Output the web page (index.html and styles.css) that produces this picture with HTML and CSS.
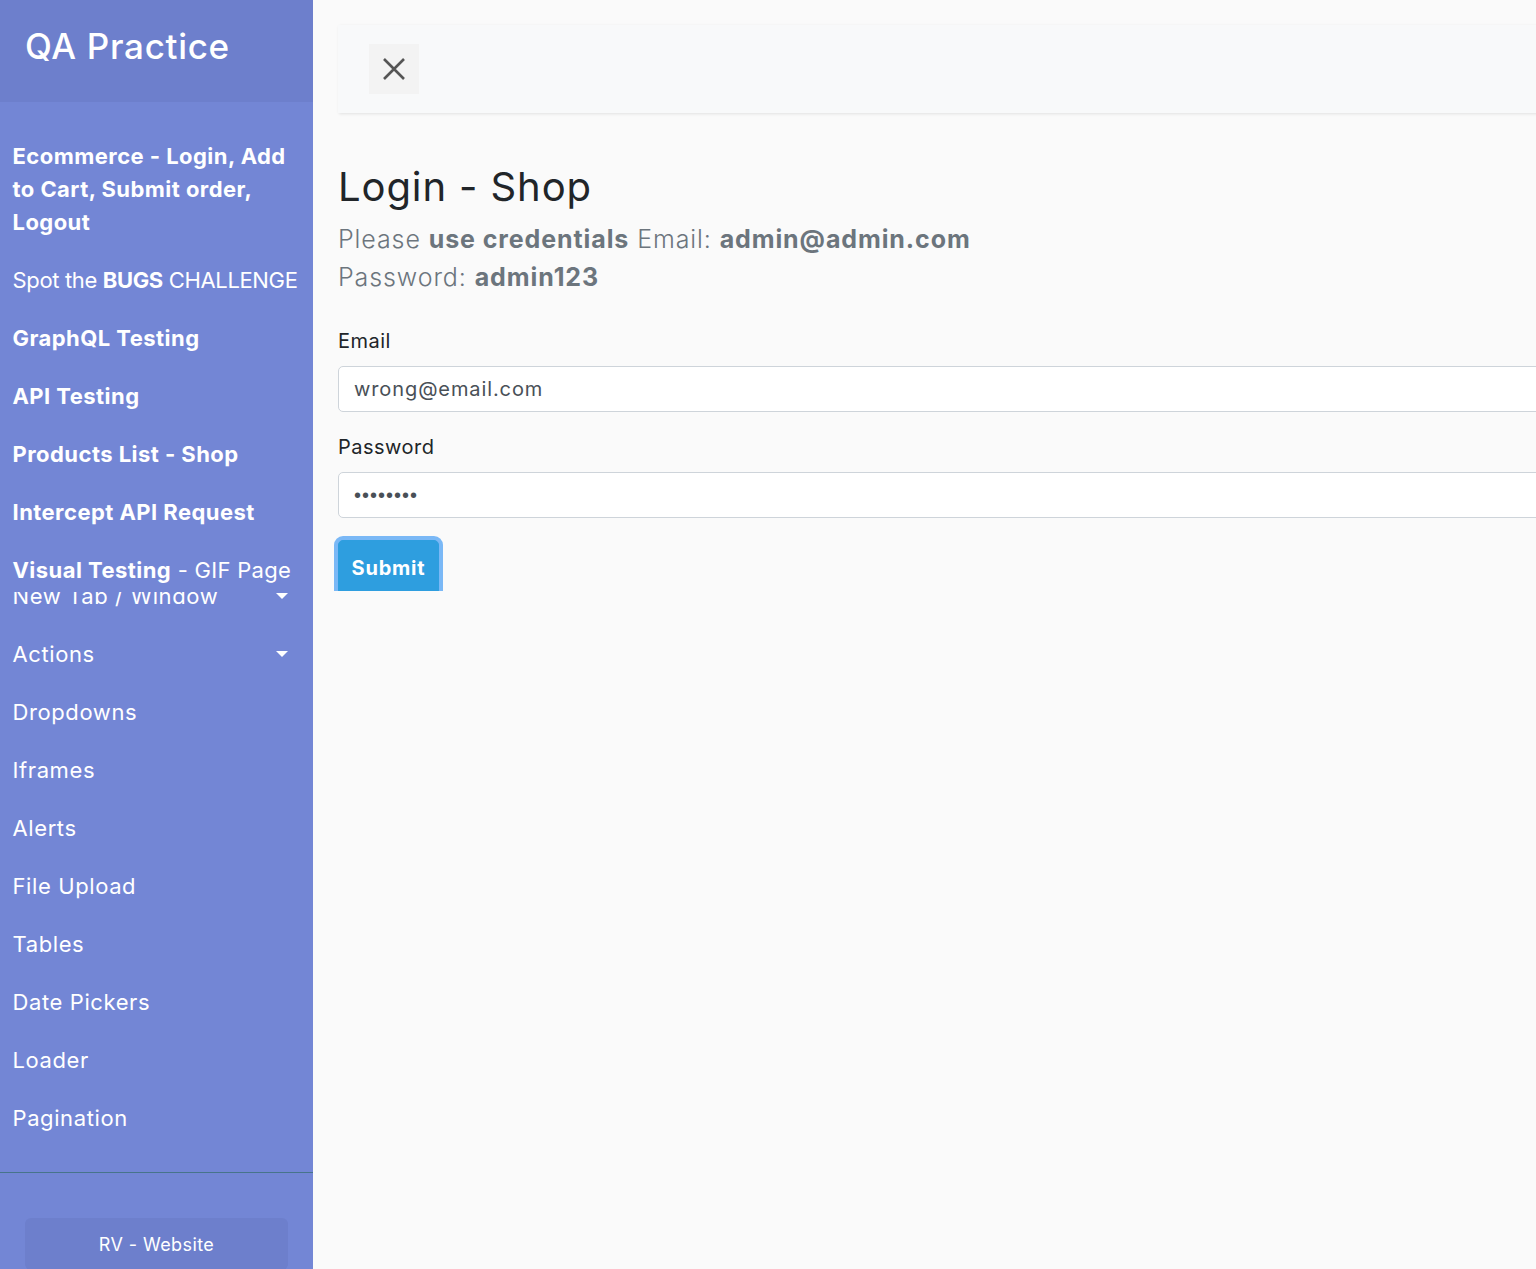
FILE: index.html
```html
<!DOCTYPE html>
<html lang="en">
<head>
<meta charset="utf-8">
<title>QA Practice - Login Shop</title>
<link rel="stylesheet" href="styles.css">
</head>
<body>
<div class="wrapper">
  <nav class="sidebar">
    <div class="sidebar-header">
      <h3>QA Practice</h3>
    </div>
    <ul class="components">
      <li><a href="#"><b>Ecommerce - Login, Add to Cart, Submit order, Logout</b></a></li>
      <li class="item-spot"><a href="#">Spot the <b>BUGS</b> CHALLENGE</a></li>
      <li><a href="#"><b>GraphQL Testing</b></a></li>
      <li><a href="#"><b>API Testing</b></a></li>
      <li><a href="#"><b>Products List - Shop</b></a></li>
      <li><a href="#"><b>Intercept API Request</b></a></li>
      <li class="item-visual"><a href="#"><b>Visual Testing</b> - GIF Page</a></li>
      <li class="item-newtab"><a href="#" class="dropdown-toggle">New Tab / Window</a></li>
      <li><a href="#" class="dropdown-toggle">Actions</a></li>
      <li><a href="#">Dropdowns</a></li>
      <li><a href="#">Iframes</a></li>
      <li><a href="#">Alerts</a></li>
      <li><a href="#">File Upload</a></li>
      <li><a href="#">Tables</a></li>
      <li><a href="#">Date Pickers</a></li>
      <li><a href="#">Loader</a></li>
      <li><a href="#">Pagination</a></li>
    </ul>
    <ul class="ctas">
      <li><a href="#" class="article">RV - Website</a></li>
    </ul>
  </nav>
  <main class="content">
    <div class="navbar">
      <button class="close-btn" type="button" aria-label="Close">
        <svg width="24" height="24" viewBox="0 0 24 24"><path d="M2 2 L22 22 M22 2 L2 22" stroke="#555" stroke-width="2.6" fill="none"/></svg>
      </button>
    </div>
    <div class="page-clip">
      <h2 class="title">Login - Shop</h2>
      <p class="lead">Please <b>use credentials</b> Email: <b>admin@admin.com</b><br>Password: <b>admin123</b></p>
      <form class="login-form">
        <div class="form-group">
          <label for="email">Email</label>
          <input id="email" class="form-control" type="text" value="wrong@email.com">
        </div>
        <div class="form-group">
          <label for="password">Password</label>
          <input id="password" class="form-control password" type="password" value="12345678">
        </div>
        <button type="button" class="btn-submit">Submit</button>
      </form>
    </div>
  </main>
</div>
</body>
</html>
```
FILE: styles.css
```css
html, body {
  margin: 0;
  padding: 0;
  overflow: hidden;
}
body {
  font-family: "Inter", "Open Sans", sans-serif;
  background: #fafafa;
  color: #212529;
}
.wrapper {
  display: flex;
  align-items: stretch;
  width: max-content;
  min-height: 1320px;
}
.sidebar {
  width: 313px;
  flex: none;
  background: #7386d5;
  color: #fff;
}
.sidebar-header {
  background: #6d7fcc;
  padding: 25px;
}
.sidebar-header h3 {
  margin: 0 0 10px;
  font-size: 35px;
  line-height: 42px;
  font-weight: 500;
  letter-spacing: 0.7px;
}
.components {
  list-style: none;
  margin: 0;
  padding: 25px 0;
  border-bottom: 1px solid #47748b;
}
.components li a {
  display: block;
  padding: 12.5px;
  font-size: 22px;
  line-height: 33px;
  letter-spacing: 0.6px;
  color: #fff;
  text-decoration: none;
  position: relative;
}
.components b {
  font-weight: 700;
  letter-spacing: 0.45px;
}
.components .item-spot a,
.components .item-spot b {
  white-space: nowrap;
  letter-spacing: -0.35px;
}
.item-visual {
  position: relative;
  z-index: 1;
  background: #7386d5;
  height: 51px;
  overflow: hidden;
}
.components .item-visual a {
  letter-spacing: 0.3px;
}
.item-newtab {
  margin-top: -25px;
}
.dropdown-toggle::after {
  content: "";
  position: absolute;
  right: 25px;
  top: 50%;
  transform: translateY(-50%);
  border-top: 6.6px solid #fff;
  border-left: 6.6px solid transparent;
  border-right: 6.6px solid transparent;
}
.ctas {
  list-style: none;
  margin: 0;
  padding: 45px 25px 25px;
}
.ctas a {
  display: block;
  text-align: center;
  font-size: 18px;
  line-height: 27px;
  letter-spacing: 0.4px;
  padding: 12.5px;
  border-radius: 6px;
  background: #6d7fcc;
  color: #fff;
  text-decoration: none;
}
.content {
  width: 1700px;
  padding: 25px;
}
.navbar {
  height: 88px;
  box-sizing: border-box;
  padding: 18.75px 31.25px;
  background: #f8f9fa;
  box-shadow: 1px 1px 3px rgba(0, 0, 0, 0.1);
  margin-bottom: 50px;
  display: flex;
  align-items: center;
}
.close-btn {
  width: 50px;
  height: 50px;
  border: none;
  background: #f3f3f3;
  padding: 0;
  display: flex;
  align-items: center;
  justify-content: center;
}
.page-clip {
  height: 428px;
  overflow: hidden;
  margin-left: -5px;
  padding-left: 5px;
}
.title {
  margin: 0 0 10px;
  font-size: 40px;
  line-height: 48px;
  font-weight: 400;
  letter-spacing: 0.9px;
  color: #212529;
}
.lead {
  margin: 0 0 30px;
  font-size: 25px;
  line-height: 37.5px;
  font-weight: 300;
  letter-spacing: 0.9px;
  color: #6c757d;
}
.lead b {
  font-weight: 700;
}
.form-group {
  margin-bottom: 20px;
}
.form-group label {
  display: block;
  font-size: 20px;
  line-height: 30px;
  letter-spacing: 0.5px;
  margin-bottom: 10px;
  color: #212529;
}
.form-control {
  display: block;
  width: 100%;
  box-sizing: border-box;
  height: 46px;
  padding: 7.5px 15px;
  border: 1px solid #ced4da;
  border-radius: 5px;
  background: #fff;
  font-family: inherit;
  font-size: 20px;
  letter-spacing: 0.9px;
  color: #495057;
}
.form-control.password {
  font-family: "Liberation Sans", sans-serif;
  letter-spacing: 1px;
}
.btn-submit {
  margin-top: 2px;
  font-family: inherit;
  font-size: 20px;
  line-height: 30px;
  font-weight: 700;
  letter-spacing: 0.8px;
  color: #fff;
  background: #2e9edf;
  border: 1px solid #2e9edf;
  border-radius: 5px;
  padding: 11.5px 12.5px;
  box-shadow: 0 0 0 4px #7ab8f6;
}
```
